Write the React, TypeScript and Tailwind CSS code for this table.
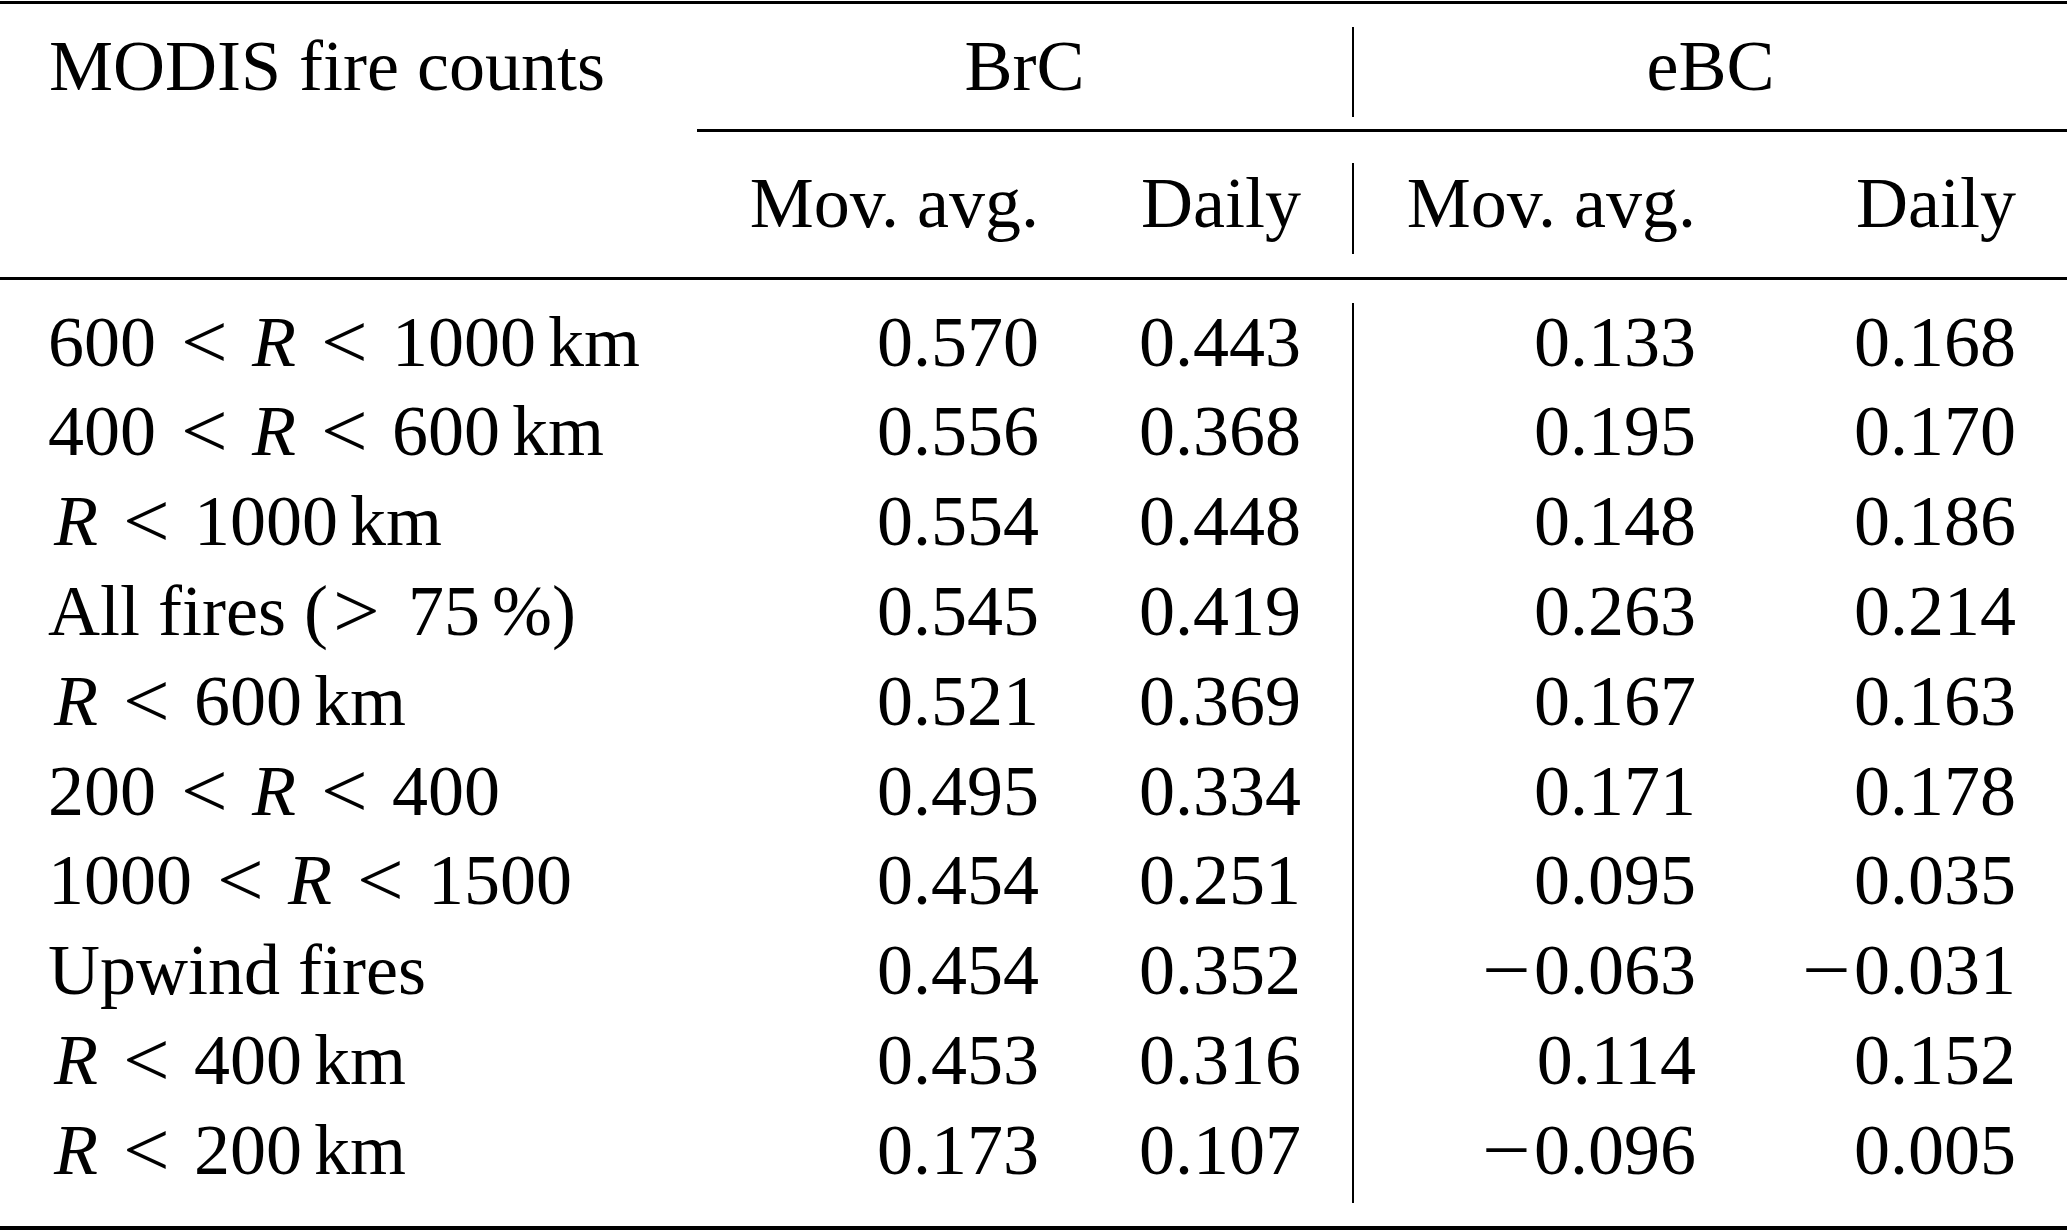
import React from "react";

const Lt = () => (
  <span className="inline-block w-[96px] text-center">
    <span className="inline-block scale-x-[1.15] scale-y-[1.1]">&lt;</span>
  </span>
);
const R = ({ first }: { first?: boolean }) => (
  <i className={first ? "ml-[6px]" : ""}>R</i>
);
const Km = () => <span className="ml-[12px]">km</span>;

const labels: React.ReactNode[] = [
  <>600<Lt /><R /><Lt />1000<Km /></>,
  <>400<Lt /><R /><Lt />600<Km /></>,
  <><R first /><Lt />1000<Km /></>,
  <>All fires (<span className="inline-block w-[56px] text-center"><span className="inline-block scale-x-[1.15] scale-y-[1.1]">&gt;</span></span><span className="ml-[24px]">75</span><span className="ml-[12px]">%</span>)</>,
  <><R first /><Lt />600<Km /></>,
  <>200<Lt /><R /><Lt />400</>,
  <>1000<Lt /><R /><Lt />1500</>,
  <>Upwind fires</>,
  <><R first /><Lt />400<Km /></>,
  <><R first /><Lt />200<Km /></>,
];

const brcMov = ["0.570", "0.556", "0.554", "0.545", "0.521", "0.495", "0.454", "0.454", "0.453", "0.173"];
const brcDaily = ["0.443", "0.368", "0.448", "0.419", "0.369", "0.334", "0.251", "0.352", "0.316", "0.107"];
const ebcMov = ["0.133", "0.195", "0.148", "0.263", "0.167", "0.171", "0.095", "-0.063", "0.114", "-0.096"];
const ebcDaily = ["0.168", "0.170", "0.186", "0.214", "0.163", "0.178", "0.035", "-0.031", "0.152", "0.005"];

const Num = ({ v }: { v: string }) =>
  v.startsWith("-") ? (
    <>
      <span className="inline-block w-[56px] text-center">
        <span className="inline-block scale-x-[1.2]">−</span>
      </span>
      {v.slice(1)}
    </>
  ) : (
    <>{v}</>
  );

export default function App() {
  return (
    <div className="w-[2067px] h-[1230px] bg-white text-black font-['Liberation_Serif','Times_New_Roman',serif] text-[72px] leading-[90px] overflow-hidden">
      {/* top rule */}
      <div className="mt-[1px] h-[3px] bg-black" />

      {/* header row 1 */}
      <div className="flex h-[125px]">
        <div className="grid grid-cols-[697px_655px] pt-[16.7px]">
          <div className="pl-[49px] whitespace-nowrap">MODIS fire counts</div>
          <div className="text-center">BrC</div>
        </div>
        <div className="w-[2px] bg-black mt-[23.3px] h-[90px]" />
        <div className="w-[713px] pt-[16.7px] text-center">eBC</div>
      </div>

      {/* cmidrule */}
      <div className="ml-[697px] h-[3px] bg-black" />

      {/* header row 2 */}
      <div className="flex h-[145px]">
        <div className="grid grid-cols-[697px_342px_262px_51px] pt-[25.7px]">
          <div />
          <div className="text-right whitespace-nowrap">Mov. avg.</div>
          <div className="text-right">Daily</div>
          <div />
        </div>
        <div className="w-[2px] bg-black mt-[31.3px] h-[90.7px]" />
        <div className="grid grid-cols-[342px_320px_51px] pt-[25.7px]">
          <div className="text-right whitespace-nowrap">Mov. avg.</div>
          <div className="text-right">Daily</div>
          <div />
        </div>
      </div>

      {/* midrule */}
      <div className="h-[3px] bg-black" />

      {/* body */}
      <div className="flex h-[946px]">
        <div className="grid grid-cols-[697px_342px_262px_51px] auto-rows-[89.8px] leading-[89.8px] pt-[17.7px] content-start">
          {labels.map((l, i) => (
            <React.Fragment key={i}>
              <div className="pl-[48px] whitespace-nowrap">{l}</div>
              <div className="text-right"><Num v={brcMov[i]} /></div>
              <div className="text-right"><Num v={brcDaily[i]} /></div>
              <div />
            </React.Fragment>
          ))}
        </div>
        <div className="w-[2px] bg-black mt-[22.7px] h-[900px]" />
        <div className="grid grid-cols-[342px_320px_51px] auto-rows-[89.8px] leading-[89.8px] pt-[17.7px] content-start">
          {ebcMov.map((v, i) => (
            <React.Fragment key={i}>
              <div className="text-right whitespace-nowrap"><Num v={v} /></div>
              <div className="text-right whitespace-nowrap"><Num v={ebcDaily[i]} /></div>
              <div />
            </React.Fragment>
          ))}
        </div>
      </div>

      {/* bottom rule */}
      <div className="h-[4px] bg-black" />
    </div>
  );
}
